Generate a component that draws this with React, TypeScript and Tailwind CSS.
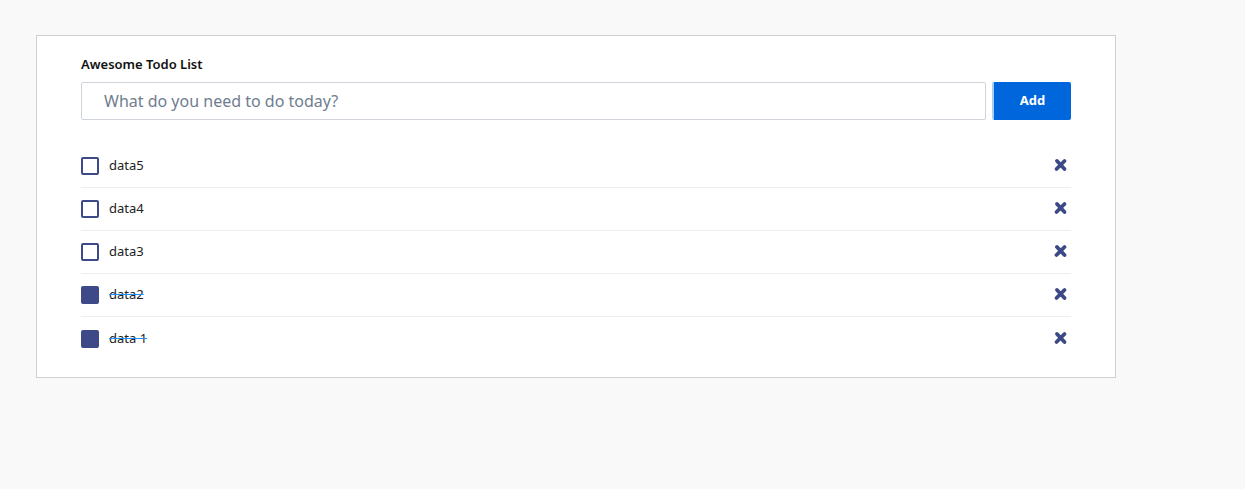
import React, { useState } from 'react';

type Todo = { id: number; text: string; done: boolean };

const initialTodos: Todo[] = [
  { id: 5, text: 'data5', done: false },
  { id: 4, text: 'data4', done: false },
  { id: 3, text: 'data3', done: false },
  { id: 2, text: 'data2', done: true },
  { id: 1, text: 'data 1', done: true },
];

const CrossIcon = () => (
  <svg width="15" height="14" viewBox="0 0 15 14" aria-hidden="true">
    <path
      d="M4 3 L11.5 11 M11.5 3 L3.5 11"
      stroke="#3b4a86"
      strokeWidth="3.8"
      strokeLinecap="round"
    />
  </svg>
);

export default function App() {
  const [todos, setTodos] = useState<Todo[]>(initialTodos);
  const [value, setValue] = useState('');

  const toggle = (id: number) =>
    setTodos((t) => t.map((x) => (x.id === id ? { ...x, done: !x.done } : x)));
  const remove = (id: number) => setTodos((t) => t.filter((x) => x.id !== id));

  return (
    <div className="min-h-[489px] bg-[#f9f9f9] pt-[35px] pl-[36px] font-['Noto_Sans',sans-serif]">
      <div className="w-[1080px] border border-[#cfcfd6] bg-white px-[44px] pt-[18px] pb-[17px]">
        <h1 className="text-[13px] font-semibold leading-[20px] text-[#111]">Awesome Todo List</h1>
        <div className="mt-[8px] flex h-[38px] gap-[6px]">
          <input
            value={value}
            onChange={(e) => setValue(e.target.value)}
            placeholder="What do you need to do today?"
            className="h-full flex-1 rounded-[2px] border border-[#cfd3da] px-[22px] text-[16px] text-[#333] outline-none placeholder:text-[#6f7d8f]"
          />
          <button className="h-full w-[79px] rounded-[2px] border-l-[2px] border-[#a9cdf5] bg-[#0066dc] text-[13px] font-bold text-white">
            Add
          </button>
        </div>
        <ul className="mt-[25px]">
          {todos.map((t, i) => (
            <li
              key={t.id}
              className={`flex h-[43px] items-center ${i < todos.length - 1 ? 'border-b border-[#eeeeee]' : ''}`}
            >
              <button
                onClick={() => toggle(t.id)}
                className={`h-[18px] w-[18px] rounded-[2px] border-[2px] border-[#3d4a87] ${t.done ? 'bg-[#3d4a87]' : 'bg-white'}`}
              />
              <span
                className={`ml-[10px] text-[13px] text-[#222] ${t.done ? 'line-through decoration-[#1e90ff]' : ''}`}
              >
                {t.text}
              </span>
              <button onClick={() => remove(t.id)} className="ml-auto mr-[3px] mb-[2px] flex items-center">
                <CrossIcon />
              </button>
            </li>
          ))}
        </ul>
      </div>
    </div>
  );
}
